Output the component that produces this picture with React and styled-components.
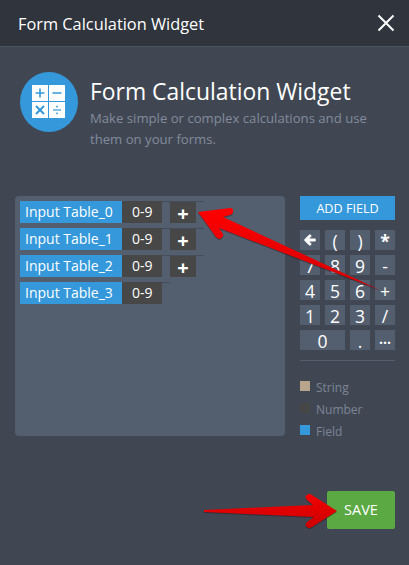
import React from "react";
import styled, { createGlobalStyle } from "styled-components";
import { FaArrowLeft } from "react-icons/fa";

const GlobalStyle = createGlobalStyle`
  html, body {
    margin: 0;
    padding: 0;
    background: #404753;
  }
  * {
    box-sizing: border-box;
  }
`;

const Page = styled.div`
  position: relative;
  width: 409px;
  height: 565px;
  overflow: hidden;
  background: #404753;
  font-family: "Open Sans", "Noto Sans", sans-serif;
  color: #fff;
`;

const TopBar = styled.div`
  display: flex;
  align-items: center;
  justify-content: space-between;
  height: 47px;
  padding: 1px 13px 0 18px;
  background: #2f343d;
  border-bottom: 1px solid #4a5260;
  font-size: 16.35px;
`;

const CloseBtn = styled.div`
  display: flex;
  width: 20px;
  height: 20px;
  margin-top: -1px;
`;

const Intro = styled.div`
  display: flex;
  padding: 25px 20px 0;
  height: 149px;
`;

const Badge = styled.div`
  display: flex;
  align-items: center;
  justify-content: center;
  flex: none;
  width: 58px;
  height: 60px;
  margin-right: 12px;
  border-radius: 50%;
  background: #3498db;
`;

const IntroText = styled.div`
  display: flex;
  flex-direction: column;
  padding-top: 5px;
`;

const Heading = styled.div`
  font-size: 22.9px;
  line-height: 30px;
`;

const Sub = styled.div`
  font-size: 13.15px;
  line-height: 21px;
  color: #828b9c;
  margin-top: 1px;
`;

const Main = styled.div`
  display: flex;
  height: 240px;
  padding: 0 14px 0 15px;
`;

const Panel = styled.div`
  display: flex;
  flex-direction: column;
  gap: 5px;
  width: 270px;
  height: 240px;
  padding: 5px;
  border-radius: 4px;
  background: #535e6e;
`;

const FieldRow = styled.div`
  display: flex;
  align-self: flex-start;
  height: 22px;
  border-top: 1px solid #464c58;
  font-size: 14px;
  line-height: 22px;
`;

const FieldName = styled.div`
  width: 102px;
  height: 22px;
  margin-top: -1px;
  padding-left: 5px;
  background: #3498db;
`;

const FieldValue = styled.div`
  width: 40px;
  height: 22px;
  margin-top: -1px;
  padding-left: 10px;
  background: #474747;
`;

const PlusBtn = styled.div`
  width: 26px;
  margin: 0 8px;
  background: #474747;
  text-align: center;
  font-size: 20px;
  font-weight: 700;
  line-height: 24px;
`;

const RowEnd = styled.span`
  width: 8px;
`;

const Side = styled.div`
  display: flex;
  flex-direction: column;
  width: 95px;
  margin-left: 15px;
`;

const AddField = styled.div`
  height: 24px;
  background: #3498db;
  text-align: center;
  font-size: 12.6px;
  line-height: 25px;
`;

const Keypad = styled.div`
  display: grid;
  grid-template-columns: repeat(4, 20px);
  grid-auto-rows: 20px;
  gap: 5px;
  margin-top: 10px;
`;

const Key = styled.div`
  grid-column: span ${(p) => p.$span || 1};
  background: #535e6e;
  text-align: center;
  font-size: 17.5px;
  font-weight: ${(p) => (p.$bold ? 700 : 400)};
  line-height: 23px;
`;

const SmallKey = styled(Key)`
  font-size: 14px;
  font-weight: 700;
  line-height: 18px;
`;

const BackIcon = styled(FaArrowLeft)`
  display: block;
  margin: 4px auto 0;
  stroke: #fff;
  stroke-width: 45;
`;

const Divider = styled.div`
  height: 1px;
  margin-top: 10px;
  flex: none;
  background: #535e6e;
`;

const Legend = styled.div`
  display: flex;
  flex-direction: column;
  gap: 6px;
  margin-top: 14px;
  padding-top: 4px;
`;

const LegendItem = styled.div`
  display: flex;
  align-items: center;
  flex: none;
  height: 16px;
  font-size: 12px;
  color: #7c8596;
`;

const Swatch = styled.span`
  width: 10px;
  height: 10px;
  margin: -3px 6px 0 0;
  background: ${(p) => p.$color};
`;

const Footer = styled.div`
  display: flex;
  justify-content: flex-end;
  padding: 55px 14px 0 0;
`;

const SaveBtn = styled.div`
  width: 68px;
  height: 38px;
  border-radius: 2px;
  background: #5ba942;
  text-align: center;
  font-size: 14.5px;
  line-height: 38px;
`;

const Arrows = styled.svg`
  position: absolute;
  left: 0;
  top: 0;
  pointer-events: none;
  filter: drop-shadow(0 1px 0 rgba(30, 20, 30, 0.45));
`;

const CalcIcon = () => (
  <svg width="34" height="34" viewBox="0 0 34 34">
    <rect x="0" y="0" width="16" height="16" fill="#fff" />
    <rect x="17" y="0" width="16" height="16" fill="#fff" />
    <rect x="0" y="17" width="16" height="16" fill="#fff" />
    <rect x="17" y="17" width="16" height="16" fill="#fff" />
    <path d="M3.5 8h9M8 3.5v9M20.5 8h9" stroke="#3498db" strokeWidth="1.6" fill="none" />
    <path d="M4 21l8 8M12 21l-8 8" stroke="#3498db" strokeWidth="2" fill="none" />
    <path d="M21 25h8" stroke="#3498db" strokeWidth="1.2" fill="none" />
    <rect x="24.2" y="20.8" width="1.6" height="1.6" fill="#3498db" />
    <rect x="24.2" y="27.6" width="1.6" height="1.6" fill="#3498db" />
  </svg>
);

const fields = ["Input Table_0", "Input Table_1", "Input Table_2", "Input Table_3"];
const keys = ["(", ")", "*", "7", "8", "9", "-", "4", "5", "6", "+", "1", "2", "3", "/"];

export default function App() {
  return (
    <Page>
      <GlobalStyle />
      <TopBar>
        Form Calculation Widget
        <CloseBtn>
          <svg width="20" height="20" viewBox="0 0 20 20">
            <path d="M2.500 2.500l15 15M17.500 2.500l-15 15" stroke="#fff" strokeWidth="2" fill="none" />
          </svg>
        </CloseBtn>
      </TopBar>
      <Intro>
        <Badge>
          <CalcIcon />
        </Badge>
        <IntroText>
          <Heading>Form Calculation Widget</Heading>
          <Sub>
            Make simple or complex calculations and use
            <br />
            them on your forms.
          </Sub>
        </IntroText>
      </Intro>
      <Main>
        <Panel>
          {fields.map((name, i) => (
            <FieldRow key={name}>
              <FieldName>{name}</FieldName>
              <FieldValue>0-9</FieldValue>
              {i < 3 ? <PlusBtn>+</PlusBtn> : <RowEnd />}
            </FieldRow>
          ))}
        </Panel>
        <Side>
          <AddField>ADD FIELD</AddField>
          <Keypad>
            <Key>
              <BackIcon size={12} />
            </Key>
            {keys.map((k) => (
              <Key key={k} $bold={k === "*"}>
                {k}
              </Key>
            ))}
            <Key $span={2}>0</Key>
            <Key>.</Key>
            <SmallKey>...</SmallKey>
          </Keypad>
          <Divider />
          <Legend>
            <LegendItem>
              <Swatch $color="#b9a48c" />
              String
            </LegendItem>
            <LegendItem>
              <Swatch $color="#474747" />
              Number
            </LegendItem>
            <LegendItem>
              <Swatch $color="#3498db" />
              Field
            </LegendItem>
          </Legend>
        </Side>
      </Main>
      <Footer>
        <SaveBtn>SAVE</SaveBtn>
      </Footer>
      <Arrows width="409" height="565" viewBox="0 0 409 565">
        <defs>
          <linearGradient id="arrowUp" x1="0" y1="0" x2="0" y2="1">
            <stop offset="0" stopColor="#ff0000" />
            <stop offset="1" stopColor="#d40000" />
          </linearGradient>
          <linearGradient id="arrowSide" x1="0" y1="0" x2="0" y2="1">
            <stop offset="0" stopColor="#f40000" />
            <stop offset="1" stopColor="#cc0000" />
          </linearGradient>
        </defs>
        <path
          d="M198 212L230 208Q234 208 233 212Q233 214 230 215L223 217L380 290L219 228L223 234Q224 237 220 239Q218 239 216 237Z"
          fill="url(#arrowUp)"
        />
        <path
          d="M204 510L313 505L307 500Q304 496 307 495Q309 493 312 495L337 511L312 527Q309 529 307 527Q304 525 307 522L314 517L204 512Z"
          fill="url(#arrowSide)"
        />
      </Arrows>
    </Page>
  );
}
